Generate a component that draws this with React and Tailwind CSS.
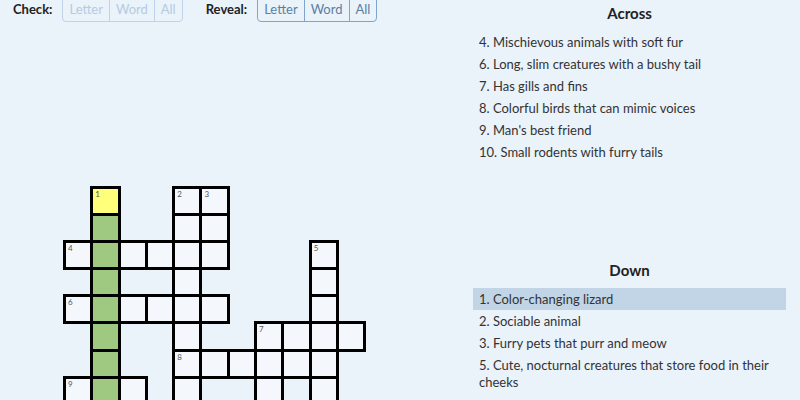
import React from 'react';

const rows = [
    ".#..##.....",
    ".#..##.....",
    "######...#.",
    ".#..#....#.",
    "######...#.",
    ".#..#..####",
    ".#..######.",
    "###.#..#.#.",
    ".#..#..#.#.",
];

const numbers = {
    "0-1": 1, "0-4": 2, "0-5": 3, "2-0": 4, "2-9": 5,
    "4-0": 6, "5-7": 7, "6-4": 8, "7-0": 9,
};

const across = [
    "4. Mischievous animals with soft fur",
    "6. Long, slim creatures with a bushy tail",
    "7. Has gills and fins",
    "8. Colorful birds that can mimic voices",
    "9. Man's best friend",
    "10. Small rodents with furry tails",
];

const down = [
    "1. Color-changing lizard",
    "2. Sociable animal",
    "3. Furry pets that purr and meow",
    "5. Cute, nocturnal creatures that store food in their cheeks",
];

function ButtonGroup({ disabled }) {
    const base = disabled
        ? "border-[#bed3e9] text-[#b5cbe2]"
        : "border-[#7fa5cc] text-[#5b7fa5]";
    return (
        <div className={`flex rounded-b-[4px] border ${base}`}>
            {["Letter", "Word", "All"].map((label, i) => (
                <button
                    key={label}
                    className={`px-[6px] py-[3px] leading-[17px] text-[13px] ${i > 0 ? "border-l " + base : ""}`}
                >
                    {label}
                </button>
            ))}
        </div>
    );
}

function Cell({ r, c }) {
    const filled = rows[r][c] === "#";
    if (!filled) return <div />;
    let bg = "bg-[#f4f8fd]";
    if (c === 1 && r === 0) bg = "bg-[#ffff7c]";
    else if (c === 1) bg = "bg-[#9fc880]";
    const num = numbers[`${r}-${c}`];
    return (
        <div className={`relative -m-[1.5px] border-[3px] border-black ${bg}`}>
            {num && (
                <span className="absolute left-[2px] top-[1px] text-[8px] leading-[9px] text-[#555]">{num}</span>
            )}
        </div>
    );
}

function ClueList({ title, clues, active, className }) {
    return (
        <div className={className}>
            <h2 className="text-center text-[15px] font-bold leading-[20px] text-[#222]">{title}</h2>
            <ul className="mt-[8px]">
                {clues.map((clue, i) => (
                    <li
                        key={clue}
                        className={`px-[6px] py-[2.5px] text-[13px] leading-[17px] text-[#333] ${i === active ? "bg-[#c1d5e6]" : ""}`}
                    >
                        {clue}
                    </li>
                ))}
            </ul>
        </div>
    );
}

export default function App() {
    return (
        <div
            className="flex h-[400px] w-[800px] overflow-hidden bg-[#eaf2fa]"
            style={{ fontFamily: "Lato, 'Noto Sans', sans-serif" }}
        >
            {/* Left: controls + grid */}
            <div className="flex w-[473px] flex-col">
                <div className="-mt-[3px] flex items-center pl-[13px] text-[13px] text-[#222]">
                    <span className="font-bold">Check:</span>
                    <div className="ml-[10px]"><ButtonGroup disabled /></div>
                    <span className="ml-[23px] font-bold">Reveal:</span>
                    <div className="ml-[10px]"><ButtonGroup /></div>
                </div>
                <div className="ml-[64.5px] mt-[165px] grid grid-cols-[repeat(11,27.3px)] grid-rows-[repeat(9,27.2px)]">
                    {rows.map((row, r) =>
                        row.split("").map((_, c) => <Cell key={`${r}-${c}`} r={r} c={c} />)
                    )}
                </div>
            </div>

            {/* Right: clues */}
            <div className="flex w-[313px] flex-col pt-[3px]">
                <ClueList title="Across" clues={across} active={-1} className="h-[257px]" />
                <ClueList title="Down" clues={down} active={0} />
            </div>
        </div>
    );
}
